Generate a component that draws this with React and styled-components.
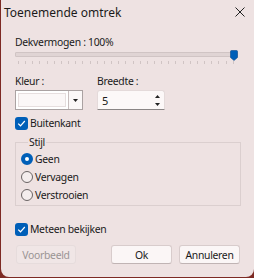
import React from "react";
import styled, { createGlobalStyle } from "styled-components";

const Global = createGlobalStyle`
  html, body { margin: 0; padding: 0; background: #7d2a24; }
  body { width: 254px; height: 278px; overflow: hidden; font-family: "Noto Sans", "Open Sans", sans-serif; }
`;

const Window = styled.div`
  width: 253px;
  height: 277px;
  margin-left: 1px;
  background: #eee2e2;
  border-radius: 0 0 8px 8px;
  display: flex;
  flex-direction: column;
  color: #1a1a1a;
  font-size: 10.4px;
  letter-spacing: -0.3px;
`;

const TitleBar = styled.div`
  height: 24px;
  display: flex;
  align-items: center;
  justify-content: space-between;
  padding: 0 9px 0 3px;
  font-size: 12px;
  letter-spacing: 0;
`;

const Close = styled.svg`
  width: 10px;
  height: 10px;
`;

const Body = styled.div`
  padding: 10px 13px 0 14px;
  display: flex;
  flex-direction: column;
`;

const Label = styled.div`
  line-height: 16px;
  height: 16px;
`;

const SliderWrap = styled.div`
  position: relative;
  height: 23px;
  margin-right: 3px;
`;

const Track = styled.div`
  position: absolute;
  left: 0;
  right: 0;
  top: 2px;
  height: 5px;
  box-sizing: border-box;
  background: #e0d4d4;
  border: 1px solid #d0c4c4;
  border-radius: 1px;
`;

const Thumb = styled.svg`
  position: absolute;
  right: 0;
  top: 0;
  width: 8px;
  height: 11px;
`;

const Ticks = styled.div`
  position: absolute;
  left: 3px;
  right: 4px;
  top: 11px;
  height: 3px;
  display: flex;
  justify-content: space-between;
`;

const Tick = styled.span`
  width: 1px;
  height: 3px;
  background: #d0c4c4;
`;

const Row = styled.div`
  display: flex;
  gap: 14px;
`;

const Field = styled.div`
  display: flex;
  flex-direction: column;
  gap: 1px;
`;

const Combo = styled.div`
  width: 68px;
  height: 20px;
  border: 1px solid #aaa2a2;
  background: #fff;
  display: flex;
  box-sizing: border-box;
`;

const ComboFace = styled.div`
  flex: 1;
  margin: 2px;
  background: #fbf7f7;
  border: 1px solid #e6dede;
`;

const ComboButton = styled.div`
  width: 13px;
  border-left: 1px solid #c8bebe;
  display: flex;
  align-items: center;
  justify-content: center;
  background: #fbf8f8;
`;

const Spin = styled.div`
  width: 68px;
  height: 20px;
  box-sizing: border-box;
  background: #fcf8f8;
  border: 1px solid #e4dada;
  border-bottom: 1px solid #8a8585;
  border-radius: 3px 3px 0 0;
  display: flex;
  align-items: center;
  padding-left: 4px;
  font-size: 11px;
`;

const SpinText = styled.span`
  flex: 1;
`;

const SpinArrows = styled.div`
  width: 11px;
  height: 16px;
  margin-right: 1px;
  display: flex;
  flex-direction: column;
  align-items: center;
  justify-content: space-around;
`;

const CheckRow = styled.label`
  display: flex;
  align-items: center;
  gap: 2px;
  height: 16px;
  margin-top: ${p => p.$mt || 0}px;
`;

const Box = styled.span`
  width: 13px;
  height: 13px;
  border-radius: 3px;
  background: #005fb8;
  display: flex;
  align-items: center;
  justify-content: center;
`;

const Group = styled.fieldset`
  margin: 4px 0 0 0;
  padding: 1px 0 1px 5px;
  border: 1px solid #dbcfcf;
  border-radius: 0;
  width: 226px;
  box-sizing: border-box;
  display: flex;
  flex-direction: column;
`;

const Legend = styled.legend`
  padding: 0 1px;
  margin-left: 7px;
  line-height: 14px;
  font-size: 10.4px;
`;

const RadioRow = styled.div`
  display: flex;
  align-items: center;
  gap: 2px;
  height: 18px;
`;

const Radio = styled.span`
  width: 12px;
  height: 12px;
  box-sizing: border-box;
  border-radius: 50%;
  border: ${p => (p.$on ? "4px solid #005fb8" : "1px solid #6a6464")};
  background: ${p => (p.$on ? "#fff" : "#f4eded")};
`;

const Buttons = styled.div`
  display: flex;
  margin: 8px 0 0 1px;
  gap: 7px;
`;

const Button = styled.button`
  width: ${p => (p.$disabled ? 60 : 61)}px;
  height: 19px;
  box-sizing: border-box;
  font-family: inherit;
  font-size: 10.4px;
  letter-spacing: -0.3px;
  padding: 0;
  border-radius: 3px;
  border: 1px solid ${p => (p.$disabled ? "#e6dcdc" : "#d8cccc")};
  border-bottom-color: ${p => (p.$disabled ? "#e6dcdc" : "#c0b4b4")};
  background: ${p => (p.$disabled ? "#f0e6e6" : "#fbf6f6")};
  color: ${p => (p.$disabled ? "#9a9494" : "#1a1a1a")};
  margin-left: ${p => p.$ml || 0}px;
`;

const Check = () => (
  <Box>
    <svg width="9" height="9" viewBox="0 0 9 9">
      <path d="M1.2 4.6 L3.5 6.8 L7.8 2" fill="none" stroke="#fff" strokeWidth="1.2" />
    </svg>
  </Box>
);

export default function App() {
  const ticks = Array.from({ length: 31 });
  return (
    <>
      <Global />
      <Window>
        <TitleBar>
          <span>Toenemende omtrek</span>
          <Close viewBox="0 0 10 10">
            <path d="M0.5 0.5 L9.5 9.5 M9.5 0.5 L0.5 9.5" stroke="#222" strokeWidth="1" />
          </Close>
        </TitleBar>
        <Body>
          <Label>Dekvermogen : 100%</Label>
          <SliderWrap>
            <Track />
            <Ticks>
              {ticks.map((_, i) => (
                <Tick key={i} />
              ))}
            </Ticks>
            <Thumb viewBox="0 0 8 11">
              <path d="M0.5 1.5 Q0.5 0.5 1.5 0.5 L6.5 0.5 Q7.5 0.5 7.5 1.5 L7.5 7.5 L4 10.5 L0.5 7.5 Z" fill="#005fb8" stroke="#0a4a8c" strokeWidth="0.6" />
            </Thumb>
          </SliderWrap>
          <Row>
            <Field>
              <Label>Kleur :</Label>
              <Combo>
                <ComboFace />
                <ComboButton>
                  <svg width="5" height="3" viewBox="0 0 5 3">
                    <path d="M0 0 L5 0 L2.5 3 Z" fill="#222" />
                  </svg>
                </ComboButton>
              </Combo>
            </Field>
            <Field>
              <Label>Breedte :</Label>
              <Spin>
                <SpinText>5</SpinText>
                <SpinArrows>
                  <svg width="5" height="3" viewBox="0 0 5 3">
                    <path d="M0 3 L5 3 L2.5 0 Z" fill="#222" />
                  </svg>
                  <svg width="5" height="3" viewBox="0 0 5 3">
                    <path d="M0 0 L5 0 L2.5 3 Z" fill="#222" />
                  </svg>
                </SpinArrows>
              </Spin>
            </Field>
          </Row>
          <CheckRow $mt={5}>
            <Check />
            <span>Buitenkant</span>
          </CheckRow>
          <Group>
            <Legend>Stijl</Legend>
            <RadioRow>
              <Radio $on />
              <span>Geen</span>
            </RadioRow>
            <RadioRow>
              <Radio />
              <span>Vervagen</span>
            </RadioRow>
            <RadioRow>
              <Radio />
              <span>Verstrooien</span>
            </RadioRow>
          </Group>
          <CheckRow $mt={15}>
            <Check />
            <span>Meteen bekijken</span>
          </CheckRow>
          <Buttons>
            <Button $disabled>Voorbeeld</Button>
            <Button $ml={28}>Ok</Button>
            <Button>Annuleren</Button>
          </Buttons>
        </Body>
      </Window>
    </>
  );
}
